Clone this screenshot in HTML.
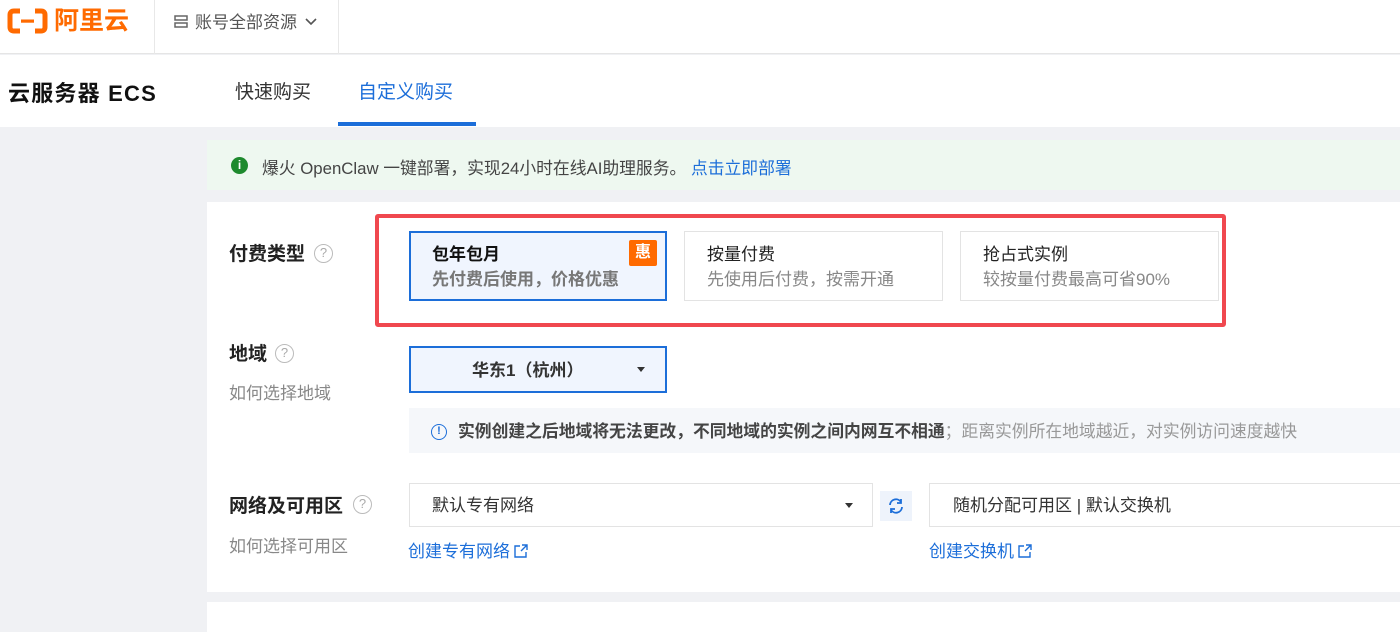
<!DOCTYPE html>
<html><head><meta charset="utf-8"><style>
*{margin:0;padding:0;box-sizing:border-box}
body{width:1400px;height:632px;overflow:hidden;background:#f0f1f4;font-family:"Liberation Sans","Noto Sans CJK SC",sans-serif;color:#333;position:relative}
.a{position:absolute;line-height:1.2}
.t{margin-top:3px}
</style></head><body>
<div class="a" style="left:0;top:0;width:1400px;height:54px;background:#fff;border-bottom:1px solid #e5e5e5"></div>
<div class="a" style="left:154px;top:0;width:1px;height:54px;background:#e8e8e8"></div>
<div class="a" style="left:338px;top:0;width:1px;height:54px;background:#e8e8e8"></div>
<svg class="a" style="left:7px;top:8px" width="41" height="26" viewBox="0 0 41 26"><path d="M13 3H7Q3 3 3 7V19Q3 23 7 23H13M28 3H34Q38 3 38 7V19Q38 23 34 23H28" fill="none" stroke="#ff6a00" stroke-width="5"/><rect x="14" y="11.5" width="13" height="3.2" fill="#ff6a00"/></svg>
<div class="a" style="left:54px;top:6px;font-size:25px;color:#ff6a00;font-weight:bold">阿里云</div>
<svg class="a" style="left:174px;top:14px" width="14" height="16" viewBox="0 0 14 16"><path d="M1 2h12v4H1zM1 9h12v4H1z" fill="none" stroke="#666" stroke-width="1.5"/></svg>
<div class="a t" style="left:195px;top:10px;font-size:17px;color:#555">账号全部资源</div>
<svg class="a" style="left:304px;top:17px" width="14" height="10"><path d="M2 2l5 5 5-5" fill="none" stroke="#555" stroke-width="1.6"/></svg>
<div class="a" style="left:0;top:55px;width:1400px;height:72px;background:#fff"></div>
<div class="a t" style="left:8px;top:78px;font-size:22px;font-weight:bold;color:#111;letter-spacing:1.2px">云服务器 ECS</div>
<div class="a t" style="left:235px;top:79px;font-size:19px;color:#333">快速购买</div>
<div class="a t" style="left:358px;top:79px;font-size:19px;color:#1c6ed9">自定义购买</div>
<div class="a" style="left:338px;top:122px;width:138px;height:4px;background:#1c6ed9"></div>
<div class="a" style="left:207px;top:140px;width:1193px;height:50px;background:#eef8f0"></div>
<div class="a" style="left:231px;top:157px;width:17px;height:17px;border-radius:50%;background:#1e8a2e;color:#fff;font-size:12px;font-weight:bold;text-align:center;line-height:17px">i</div>
<div class="a t" style="left:262px;top:156px;font-size:16.8px;color:#444;white-space:nowrap">爆火 OpenClaw 一键部署，实现24小时在线AI助理服务。 <span style="color:#1c6ed9">点击立即部署</span></div>
<div class="a" style="left:207px;top:202px;width:1193px;height:390px;background:#fff"></div>
<div class="a" style="left:207px;top:602px;width:1193px;height:30px;background:#fff"></div>
<div class="a t" style="left:229px;top:241px;font-size:19px;font-weight:bold;color:#222">付费类型</div>
<div class="a" style="left:314px;top:244px;width:19px;height:19px;border:1.5px solid #bbb;border-radius:50%;color:#aaa;font-size:13px;text-align:center;line-height:16px">?</div>
<div class="a" style="left:375px;top:214px;width:851px;height:113px;border:4px solid #f0484f;border-radius:3px"></div>
<div class="a" style="left:409px;top:231px;width:258px;height:70px;border:2px solid #1c6ed9;background:#f0f5fe"></div>
<div class="a t" style="left:432px;top:242px;font-size:17px;font-weight:bold;color:#111">包年包月</div>
<div class="a t" style="left:432px;top:267px;font-size:17px;font-weight:bold;color:#777">先付费后使用，价格优惠</div>
<div class="a" style="left:629px;top:240px;width:28px;height:26px;background:#ff6a00;border-radius:2px;color:#fff;font-size:16px;font-weight:bold;text-align:center;line-height:26px">惠</div>
<div class="a" style="left:684px;top:231px;width:259px;height:70px;border:1px solid #e3e3e3"></div>
<div class="a t" style="left:707px;top:242px;font-size:17px;color:#222">按量付费</div>
<div class="a t" style="left:707px;top:267px;font-size:17px;color:#888">先使用后付费，按需开通</div>
<div class="a" style="left:960px;top:231px;width:259px;height:70px;border:1px solid #e3e3e3"></div>
<div class="a t" style="left:983px;top:242px;font-size:17px;color:#222">抢占式实例</div>
<div class="a t" style="left:983px;top:267px;font-size:17px;color:#888">较按量付费最高可省90%</div>
<div class="a t" style="left:229px;top:341px;font-size:19px;font-weight:bold;color:#222">地域</div>
<div class="a" style="left:275px;top:344px;width:19px;height:19px;border:1.5px solid #bbb;border-radius:50%;color:#aaa;font-size:13px;text-align:center;line-height:16px">?</div>
<div class="a t" style="left:229px;top:381px;font-size:17px;color:#888">如何选择地域</div>
<div class="a" style="left:409px;top:346px;width:258px;height:47px;border:2px solid #1c6ed9;background:#f0f5fe"></div>
<div class="a t" style="left:472px;top:358px;font-size:17px;font-weight:bold;color:#333">华东1（杭州）</div>
<div class="a" style="left:637px;top:367px;border:4px solid transparent;border-top:5px solid #333"></div>
<div class="a" style="left:409px;top:408px;width:991px;height:45px;background:#f5f7fa"></div>
<div class="a" style="left:431px;top:424px;width:16px;height:16px;border:1.5px solid #1c6ed9;border-radius:50%;color:#1c6ed9;font-size:11px;font-weight:bold;text-align:center;line-height:13px">!</div>
<div class="a" style="left:458px;top:422px;font-size:16.8px;color:#999;white-space:nowrap"><b style="color:#444">实例创建之后地域将无法更改，不同地域的实例之间内网互不相通</b>；距离实例所在地域越近，对实例访问速度越快</div>
<div class="a t" style="left:229px;top:493px;font-size:19px;font-weight:bold;color:#222">网络及可用区</div>
<div class="a" style="left:353px;top:495px;width:19px;height:19px;border:1.5px solid #bbb;border-radius:50%;color:#aaa;font-size:13px;text-align:center;line-height:16px">?</div>
<div class="a t" style="left:229px;top:534px;font-size:17px;color:#888">如何选择可用区</div>
<div class="a" style="left:409px;top:483px;width:464px;height:44px;border:1px solid #e3e3e3"></div>
<div class="a t" style="left:432px;top:493px;font-size:17px;color:#333">默认专有网络</div>
<div class="a" style="left:845px;top:503px;border:4px solid transparent;border-top:5px solid #333"></div>
<div class="a" style="left:880px;top:491px;width:32px;height:30px;background:#eef3fb"></div>
<svg class="a" style="left:886px;top:496px" width="20" height="20" viewBox="0 0 20 20"><path d="M4 9a6 6 0 0 1 11-3M16 11a6 6 0 0 1-11 3" fill="none" stroke="#1c6ed9" stroke-width="1.8"/><path d="M15 3v4h-4M5 17v-4h4" fill="none" stroke="#1c6ed9" stroke-width="1.8"/></svg>
<div class="a" style="left:929px;top:483px;width:471px;height:44px;border:1px solid #e3e3e3;border-right:none"></div>
<div class="a t" style="left:953px;top:493px;font-size:17px;color:#333">随机分配可用区 | 默认交换机</div>
<div class="a" style="left:408px;top:542px;font-size:17px;color:#1c6ed9;white-space:nowrap">创建专有网络<svg width="16" height="14" viewBox="0 0 16 14" style="vertical-align:-1px;margin-left:3px"><path d="M7 2H2v11h11V8M9 1h5v5M14 1L8 7" fill="none" stroke="#1c6ed9" stroke-width="1.4"/></svg></div>
<div class="a" style="left:929px;top:542px;font-size:17px;color:#1c6ed9;white-space:nowrap">创建交换机<svg width="16" height="14" viewBox="0 0 16 14" style="vertical-align:-1px;margin-left:3px"><path d="M7 2H2v11h11V8M9 1h5v5M14 1L8 7" fill="none" stroke="#1c6ed9" stroke-width="1.4"/></svg></div>
</body></html>
